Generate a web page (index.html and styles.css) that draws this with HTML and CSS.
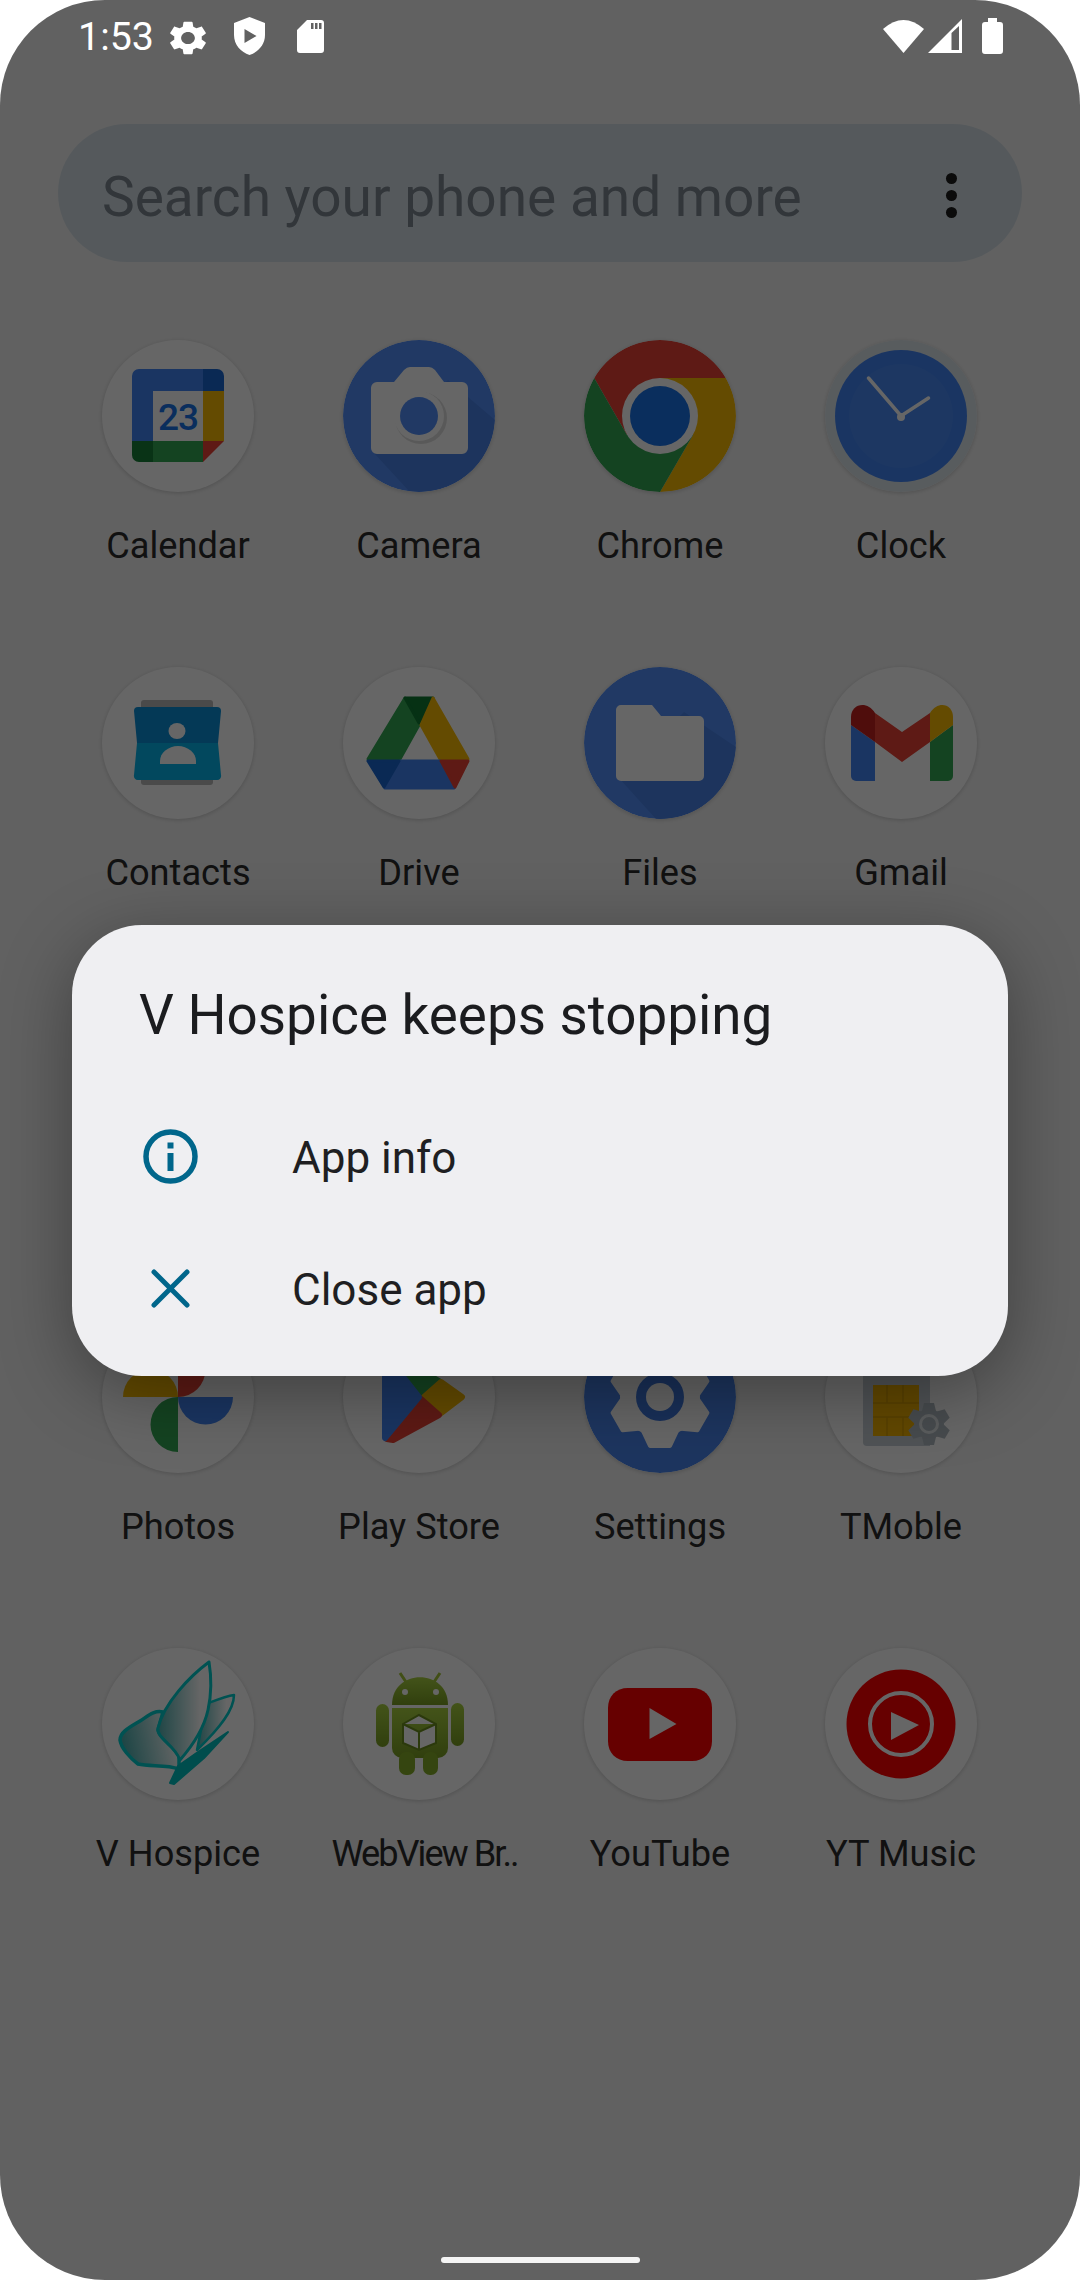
FILE: index.html
```html
<!DOCTYPE html>
<html lang="en">
<head>
<meta charset="utf-8">
<title>V Hospice keeps stopping</title>
<link rel="stylesheet" href="styles.css">
</head>
<body>
<div class="screen">
  <header class="status">
    <div class="status-group">
      <span class="time">1:53</span>
      <svg class="st-gear" viewBox="2.6 2 18.8 20" preserveAspectRatio="none"><path fill="#fff" d="M19.14 12.94c.04-.3.06-.61.06-.94 0-.32-.02-.64-.07-.94l2.03-1.58c.18-.14.23-.41.12-.61l-1.92-3.32c-.12-.22-.37-.29-.59-.22l-2.39.96c-.5-.38-1.03-.7-1.62-.94l-.36-2.54c-.04-.24-.24-.41-.48-.41h-3.84c-.24 0-.43.17-.47.41l-.36 2.54c-.59.24-1.13.57-1.62.94l-2.39-.96c-.22-.08-.47 0-.59.22L2.74 8.87c-.12.21-.08.47.12.61l2.03 1.58c-.05.3-.09.63-.09.94s.02.64.07.94l-2.03 1.58c-.18.14-.23.41-.12.61l1.92 3.32c.12.22.37.29.59.22l2.39-.96c.5.38 1.03.7 1.62.94l.36 2.54c.05.24.24.41.48.41h3.84c.24 0 .44-.17.47-.41l.36-2.54c.59-.24 1.13-.56 1.62-.94l2.39.96c.22.08.47 0 .59-.22l1.92-3.32c.12-.22.07-.47-.12-.61l-2.01-1.58zM12 15.6c-1.98 0-3.6-1.62-3.6-3.6s1.62-3.6 3.6-3.6 3.6 1.62 3.6 3.6-1.62 3.6-3.6 3.6z"/></svg>
      <svg class="st-shield" viewBox="0 0 31 38"><path fill="#fff" fill-rule="evenodd" d="M15.5 0L31 6V18C31 28 24 35 15.5 38C7 35 0 28 0 18V6ZM10.5 12V26L22.5 19Z"/></svg>
      <svg class="st-sd" viewBox="0 0 27 33"><path fill="#fff" fill-rule="evenodd" d="M10 0H24a3 3 0 0 1 3 3V30a3 3 0 0 1-3 3H3a3 3 0 0 1-3-3V10ZM14 3V9H16.500V3ZM18 3V9H20.500V3ZM22 3V9H24.500V3Z"/></svg>
    </div>
    <div class="status-group status-right">
      <svg class="st-wifi" viewBox="0 0 41 33"><path fill="#fff" d="M0 9Q20.500-9 41 9L20.500 33Z"/></svg>
      <svg class="st-signal" viewBox="0 0 34 34"><path fill="#fff" fill-rule="evenodd" d="M0 34L34 0V34ZM23.500 14V31H31V7Z"/></svg>
      <svg class="st-battery" viewBox="0 0 21 36"><path fill="#fff" d="M6 0H15V4H18a3 3 0 0 1 3 3V33a3 3 0 0 1-3 3H3a3 3 0 0 1-3-3V7a3 3 0 0 1 3-3H6Z"/></svg>
    </div>
  </header>

  <div class="search">
    <span class="search-text">Search your phone and more</span>
    <div class="kebab"><i></i><i></i><i></i></div>
  </div>

  <main class="apps">
    <div class="app">
      <svg class="ic" viewBox="0 0 152 152">
        <path fill="#4285f4" d="M37 29H101V51H51V101H30V36a7 7 0 0 1 7-7Z"/>
        <path fill="#1967d2" d="M101 29H115a7 7 0 0 1 7 7V51H101Z"/>
        <rect x="101" y="51" width="21" height="50" fill="#fbbc04"/>
        <path fill="#ea4335" d="M101 101H122L101 122Z"/>
        <rect x="51" y="101" width="50" height="21" fill="#34a853"/>
        <path fill="#188038" d="M30 101H51V122H37a7 7 0 0 1-7-7Z"/>
        <text x="76" y="89.500" class="cal-num">23</text>
      </svg>
      <span class="label">Calendar</span>
    </div>
    <div class="app">
      <svg class="ic" viewBox="0 0 152 152">
        <circle cx="76" cy="76" r="76" fill="#5390fb"/>
        <path fill="#4a82e8" d="M105 40L152 80A76 76 0 0 1 66 151L30 112Z"/>
        <path fill="#fff" d="M34 42H51L61 30Q64 27 67 27H86Q89 27 92 30L101 42H119a6 6 0 0 1 6 6V108a6 6 0 0 1-6 6H34a6 6 0 0 1-6-6V48a6 6 0 0 1 6-6Z"/>
        <circle cx="78" cy="78" r="26" fill="#dfdfdf"/>
        <circle cx="76" cy="76" r="25" fill="#fff"/>
        <circle cx="76" cy="76" r="19" fill="#5390fb"/>
      </svg>
      <span class="label">Camera</span>
    </div>
    <div class="app">
      <svg class="ic ic-bare" viewBox="0 0 152 152">
        <path fill="#ea4335" d="M141.800 38A76 76 0 0 0 10.200 38L43 95L76 38Z"/>
        <path fill="#fbbc04" d="M141.800 38H76L109 95L76 152A76 76 0 0 0 141.800 38Z"/>
        <path fill="#34a853" d="M76 152L109 95H43L10.200 38A76 76 0 0 0 76 152Z"/>
        <circle cx="76" cy="76" r="38" fill="#fff"/>
        <circle cx="76" cy="76" r="30" fill="#1a73e8"/>
      </svg>
      <span class="label">Chrome</span>
    </div>
    <div class="app">
      <svg class="ic ic-bare" viewBox="0 0 152 152">
        <circle cx="76" cy="76" r="76" fill="#dde6ec"/>
        <circle cx="76" cy="76" r="66" fill="#4285f4"/>
        <circle cx="76" cy="76" r="52" fill="#4a8bf5"/>
        <path fill="none" stroke="#fff" stroke-width="3.500" stroke-linecap="round" d="M43.500 38L76 76L103.500 58"/>
        <circle cx="76" cy="77" r="4" fill="#fff"/>
      </svg>
      <span class="label">Clock</span>
    </div>

    <div class="app">
      <svg class="ic" viewBox="0 0 152 152">
        <rect x="39" y="33" width="72" height="85" rx="3" fill="#b8b8b8"/>
        <path fill="#0a8fd8" d="M36 40H115a4 4 0 0 1 4 4L116 76H35L32 44a4 4 0 0 1 4-4Z"/>
        <path fill="#06b4ea" d="M35 76H116L119 108a4 4 0 0 1-4 5H36a4 4 0 0 1-4-5Z"/>
        <ellipse cx="75" cy="64" rx="8.500" ry="8" fill="#fff"/>
        <path fill="#fff" d="M58 97V94A18 15 0 0 1 94 94V97Z"/>
      </svg>
      <span class="label">Contacts</span>
    </div>
    <div class="app">
      <svg class="ic" viewBox="0 0 152 152">
        <g stroke-linejoin="round" stroke-width="3">
          <path fill="#34a853" stroke="#34a853" d="M62 31L76 58L57 92H25Z"/>
          <path fill="#0f7a34" stroke="#0f7a34" d="M62 31H90L76 56Z"/>
          <path fill="#fbbc04" stroke="#fbbc04" d="M90 31L125 92H97L78 58Z"/>
          <path fill="#4285f4" stroke="#4285f4" d="M57 94H97L111 121H42Z"/>
          <path fill="#1967d2" stroke="#1967d2" d="M25 94H56L41 120Z"/>
          <path fill="#ea4335" stroke="#ea4335" d="M98 94H125L112 120Z"/>
        </g>
      </svg>
      <span class="label">Drive</span>
    </div>
    <div class="app">
      <svg class="ic" viewBox="0 0 152 152">
        <circle cx="76" cy="76" r="76" fill="#5390fb"/>
        <path fill="#4a82e8" d="M100 45L152 80A76 76 0 0 1 72 152L34 110Z"/>
        <path fill="#fff" d="M37 38H68L77 49H115a5 5 0 0 1 5 5V109a5 5 0 0 1-5 5H37a5 5 0 0 1-5-5V43a5 5 0 0 1 5-5Z"/>
      </svg>
      <span class="label">Files</span>
    </div>
    <div class="app">
      <svg class="ic" viewBox="0 0 152 152">
        <path fill="#4285f4" d="M26 58L50 75V114H31a5 5 0 0 1-5-5Z"/>
        <path fill="#34a853" d="M128 58L105 75V114H123a5 5 0 0 0 5-5Z"/>
        <path fill="#ea4335" d="M50 46L77 65L105 46V75L77 95L50 75Z"/>
        <path fill="#c5221f" d="M26 50C26 37 42 33 50 46V75L26 58Z"/>
        <path fill="#fbbc04" d="M128 50C128 37 113 33 105 46V75L128 58Z"/>
      </svg>
      <span class="label">Gmail</span>
    </div>

    <div class="row-spacer"></div>

    <div class="app">
      <svg class="ic" viewBox="0 0 152 152">
        <path fill="#fbbc04" d="M21 76A27.500 27.500 0 0 1 76 76Z"/>
        <path fill="#ea4335" d="M76 21A27.500 27.500 0 0 1 76 76Z"/>
        <path fill="#4285f4" d="M76 76H131A27.500 27.500 0 0 1 76 76Z"/>
        <path fill="#34a853" d="M76 76V131A27.500 27.500 0 0 1 76 76Z"/>
      </svg>
      <span class="label">Photos</span>
    </div>
    <div class="app">
      <svg class="ic" viewBox="0 0 152 152">
        <g stroke-linejoin="round" stroke-width="6">
          <path fill="#34a853" stroke="#34a853" d="M45 31L96 60L78 76Z"/>
          <path fill="#fbbc04" stroke="#fbbc04" d="M98 61L119 76L98 92L81 76Z"/>
          <path fill="#ea4335" stroke="#ea4335" d="M44 118L78 78L96 94L50 119Z"/>
          <path fill="#4285f4" stroke="#4285f4" d="M42 33L76 76L42 117Z"/>
        </g>
      </svg>
      <span class="label">Play Store</span>
    </div>
    <div class="app">
      <svg class="ic" viewBox="0 0 152 152">
        <circle cx="76" cy="76" r="76" fill="#4a86ee"/>
        <g fill="#fff" stroke="#fff" stroke-width="4" stroke-linejoin="round">
          <circle cx="76" cy="76" r="38"/>
          <path d="M66 27H86L94 44H58Z"/>
          <path transform="rotate(60 76 76)" d="M66 27H86L94 44H58Z"/>
          <path transform="rotate(120 76 76)" d="M66 27H86L94 44H58Z"/>
          <path transform="rotate(180 76 76)" d="M66 27H86L94 44H58Z"/>
          <path transform="rotate(240 76 76)" d="M66 27H86L94 44H58Z"/>
          <path transform="rotate(300 76 76)" d="M66 27H86L94 44H58Z"/>
        </g>
        <circle cx="76" cy="76" r="24" fill="#3f78de"/>
        <circle cx="76" cy="76" r="14" fill="#fff"/>
      </svg>
      <span class="label">Settings</span>
    </div>
    <div class="app">
      <svg class="ic" viewBox="0 0 152 152">
        <path fill="#c7d0d6" d="M52 25H105V125H42a4 4 0 0 1-4-4V39Z"/>
        <rect x="48" y="64" width="46" height="51" fill="#f5b400"/>
        <path fill="none" stroke="#d9a000" stroke-width="1.500" d="M48 82H94M48 96H94M62 64V82M78 64V82M62 96V115M78 96V115"/>
        <g fill="#b2bcc2">
          <circle cx="104" cy="103" r="15"/>
          <path d="M99 82H109L111 90H97Z"/>
          <path transform="rotate(60 104 103)" d="M99 82H109L111 90H97Z"/>
          <path transform="rotate(120 104 103)" d="M99 82H109L111 90H97Z"/>
          <path transform="rotate(180 104 103)" d="M99 82H109L111 90H97Z"/>
          <path transform="rotate(240 104 103)" d="M99 82H109L111 90H97Z"/>
          <path transform="rotate(300 104 103)" d="M99 82H109L111 90H97Z"/>
        </g>
        <circle cx="104" cy="103" r="8.500" fill="none" stroke="#e4e8ea" stroke-width="3"/>
      </svg>
      <span class="label">TMoble</span>
    </div>

    <div class="app">
      <svg class="ic" viewBox="0 0 152 152">
        <defs>
          <linearGradient id="wingA" x1="1" y1="0" x2="0" y2="0"><stop offset="0.200" stop-color="#ffffff"/><stop offset="1" stop-color="#4fb0b0"/></linearGradient>
          <linearGradient id="wingB" x1="1" y1="0" x2="0" y2="0.200"><stop offset="0.100" stop-color="#ffffff"/><stop offset="1" stop-color="#4fb0b0"/></linearGradient>
        </defs>
        <path fill="url(#wingA)" stroke="#00cccc" stroke-width="2.500" stroke-linejoin="round" d="M104 56C112 53 124 48 132 47C132 62 118 80 95 102Z"/>
        <path fill="url(#wingB)" stroke="#00cccc" stroke-width="3.500" stroke-linejoin="round" d="M61 64C52 62 46 68 38 73C28 79 18 84 18 92C19 100 28 110 36 116C48 119 64 116 77 121V108C72 98 58 92 56 82Z"/>
        <path fill="url(#wingA)" stroke="#00cccc" stroke-width="3" stroke-linejoin="round" d="M107 14C88 28 62 55 56 80C54 90 72 96 78 112C92 96 102 80 106 62C110 44 109 26 107 14Z"/>
        <path fill="#00c0c0" stroke="#00c0c0" stroke-width="2" stroke-linejoin="round" d="M68 135L76 118L96 104L126 84L102 110L72 136Z"/>
      </svg>
      <span class="label">V Hospice</span>
    </div>
    <div class="app">
      <svg class="ic" viewBox="0 0 152 152">
        <defs>
          <linearGradient id="droid" x1="0" y1="0" x2="0" y2="1"><stop offset="0" stop-color="#a8d040"/><stop offset="1" stop-color="#7a9e24"/></linearGradient>
        </defs>
        <path stroke="#a4c639" stroke-width="3" d="M57 25L63 34M97 25L91 34"/>
        <path fill="url(#droid)" d="M49 57C49 20 105 20 105 57Z"/>
        <circle cx="62" cy="44" r="3" fill="#fff"/>
        <circle cx="93" cy="44" r="3" fill="#fff"/>
        <path fill="url(#droid)" d="M49 60H105V100a10 10 0 0 1-10 10H59a10 10 0 0 1-10-10Z"/>
        <rect x="33" y="56" width="13" height="43" rx="6.500" fill="url(#droid)"/>
        <rect x="108" y="55" width="13" height="43" rx="6.500" fill="url(#droid)"/>
        <rect x="56" y="104" width="16" height="23" rx="7" fill="#85ad28"/>
        <rect x="80" y="104" width="15" height="23" rx="7" fill="#85ad28"/>
        <path fill="#fff" stroke="#6d8f20" stroke-width="2" d="M76 67L93 76V95L76 102L60 95V76ZM60 76L76 84L93 76M76 84V102"/>
      </svg>
      <span class="label label-tight">WebView Br..</span>
    </div>
    <div class="app">
      <svg class="ic" viewBox="0 0 152 152">
        <path fill="#ff0000" d="M44 40H108C120 40 128 48 128 60V93C128 105 120 113 108 113H44C32 113 24 105 24 93V60C24 48 32 40 44 40Z"/>
        <path fill="#fff" d="M65.500 60L92.500 76L65.500 91Z"/>
      </svg>
      <span class="label">YouTube</span>
    </div>
    <div class="app">
      <svg class="ic" viewBox="0 0 152 152">
        <circle cx="76" cy="76" r="54.500" fill="#ff0000"/>
        <circle cx="76" cy="76" r="31" fill="none" stroke="#fff" stroke-width="4"/>
        <path fill="#fff" d="M66 64L94 77L66 92Z"/>
      </svg>
      <span class="label">YT Music</span>
    </div>
  </main>

  <div class="scrim"></div>

  <section class="dialog">
    <h1 class="dialog-title">V Hospice keeps stopping</h1>
    <div class="dialog-row">
      <svg class="dialog-icon" viewBox="0 0 63 63">
        <circle cx="31.500" cy="31.500" r="24.500" fill="none" stroke="#00668b" stroke-width="5.500"/>
        <rect x="28.500" y="17.500" width="6" height="6" fill="#00668b"/>
        <rect x="28.500" y="28" width="6" height="18" fill="#00668b"/>
      </svg>
      <span class="dialog-text">App info</span>
    </div>
    <div class="dialog-row">
      <svg class="dialog-icon" viewBox="0 0 63 63">
        <path fill="none" stroke="#00668b" stroke-width="5" stroke-linecap="round" d="M15 15L48 48M48 15L15 48"/>
      </svg>
      <span class="dialog-text">Close app</span>
    </div>
  </section>

  <div class="nav-handle"></div>
</div>
</body>
</html>
```

FILE: styles.css
```css
* { box-sizing: border-box; }
html, body { margin: 0; padding: 0; background: #fff; }
body { width: 1080px; height: 2280px; overflow: hidden; font-family: Roboto, "Liberation Sans", sans-serif; }

.screen {
  position: relative;
  width: 1080px;
  height: 2280px;
  overflow: hidden;
  border-radius: 105px;
  background: #f3f3f3;
  display: flex;
  flex-direction: column;
}

.status {
  position: relative;
  z-index: 3;
  height: 72px;
  padding: 0 77px 0 78px;
  display: flex;
  justify-content: space-between;
  align-items: center;
  flex: none;
}
.status-group { display: flex; align-items: center; }
.time { color: #fff; font-size: 39.4px; line-height: 48px; padding-top: 2px; width: 72px; white-space: nowrap; }
.st-gear { width: 36px; height: 34px; margin-left: 20px; margin-top: 3px; }
.st-shield { width: 31px; height: 38px; margin-left: 28px; }
.st-sd { width: 27px; height: 33px; margin-left: 32px; }
.st-wifi { width: 41px; height: 33px; }
.st-signal { width: 34px; height: 34px; margin-left: 4px; }
.st-battery { width: 21px; height: 36px; margin-left: 20px; }

.search {
  flex: none;
  margin: 52px 58px 0;
  height: 138px;
  border-radius: 69px;
  background: #d5dfe6;
  display: flex;
  align-items: center;
  justify-content: space-between;
  padding: 0 65px 0 44px;
}
.search-text { font-size: 55px; line-height: 64px; padding-top: 7px; color: #7d8791; white-space: nowrap; }
.kebab { display: flex; flex-direction: column; gap: 6px; padding-top: 4px; }
.kebab i { display: block; width: 11px; height: 11px; border-radius: 50%; background: #1c1c1c; }

.apps {
  flex: none;
  margin: 78px 0 0 57.5px;
  display: grid;
  grid-template-columns: repeat(4, 241px);
  grid-auto-rows: 327px;
}
.row-spacer { grid-column: 1 / -1; }
.app { display: flex; flex-direction: column; align-items: center; }
.ic {
  width: 152px;
  height: 152px;
  border-radius: 50%;
  background: #fff;
  box-shadow: 0 1px 4px rgba(0, 0, 0, .18);
  flex: none;
}
.ic-bare { background: transparent; }
.label {
  margin-top: 30px;
  font-size: 36.2px;
  line-height: 47px;
  color: #2b2b2b;
  white-space: nowrap;
}
.label-tight { letter-spacing: -2px; margin-left: 11px; }
.cal-num { font-family: Roboto, sans-serif; font-size: 37px; font-weight: 500; letter-spacing: -1px; fill: #1a73e8; text-anchor: middle; }

.scrim {
  position: absolute;
  inset: 0;
  z-index: 1;
  background: rgba(0, 0, 0, .6);
}

.dialog {
  position: absolute;
  z-index: 2;
  left: 72px;
  top: 925px;
  width: 936px;
  height: 451px;
  border-radius: 70px;
  background: #efeff2;
  box-shadow: 0 16px 70px rgba(0, 0, 0, .35);
  padding: 0 0 0 67px;
}
.dialog-title {
  margin: 0;
  height: 165px;
  padding-top: 59px;
  font-size: 54.8px;
  line-height: 62px;
  font-weight: 400;
  color: #1b1c1f;
  white-space: nowrap;
}
.dialog-row { height: 132px; display: flex; align-items: center; }
.dialog-icon { width: 63px; height: 63px; flex: none; }
.dialog-text { margin-left: 90px; padding-top: 3px; font-size: 44px; line-height: 52px; color: #1f1f22; white-space: nowrap; }

.nav-handle {
  position: relative;
  z-index: 3;
  margin: auto auto 17px;
  width: 199px;
  height: 6px;
  border-radius: 3px;
  background: #f4f4f4;
  flex: none;
}
```
